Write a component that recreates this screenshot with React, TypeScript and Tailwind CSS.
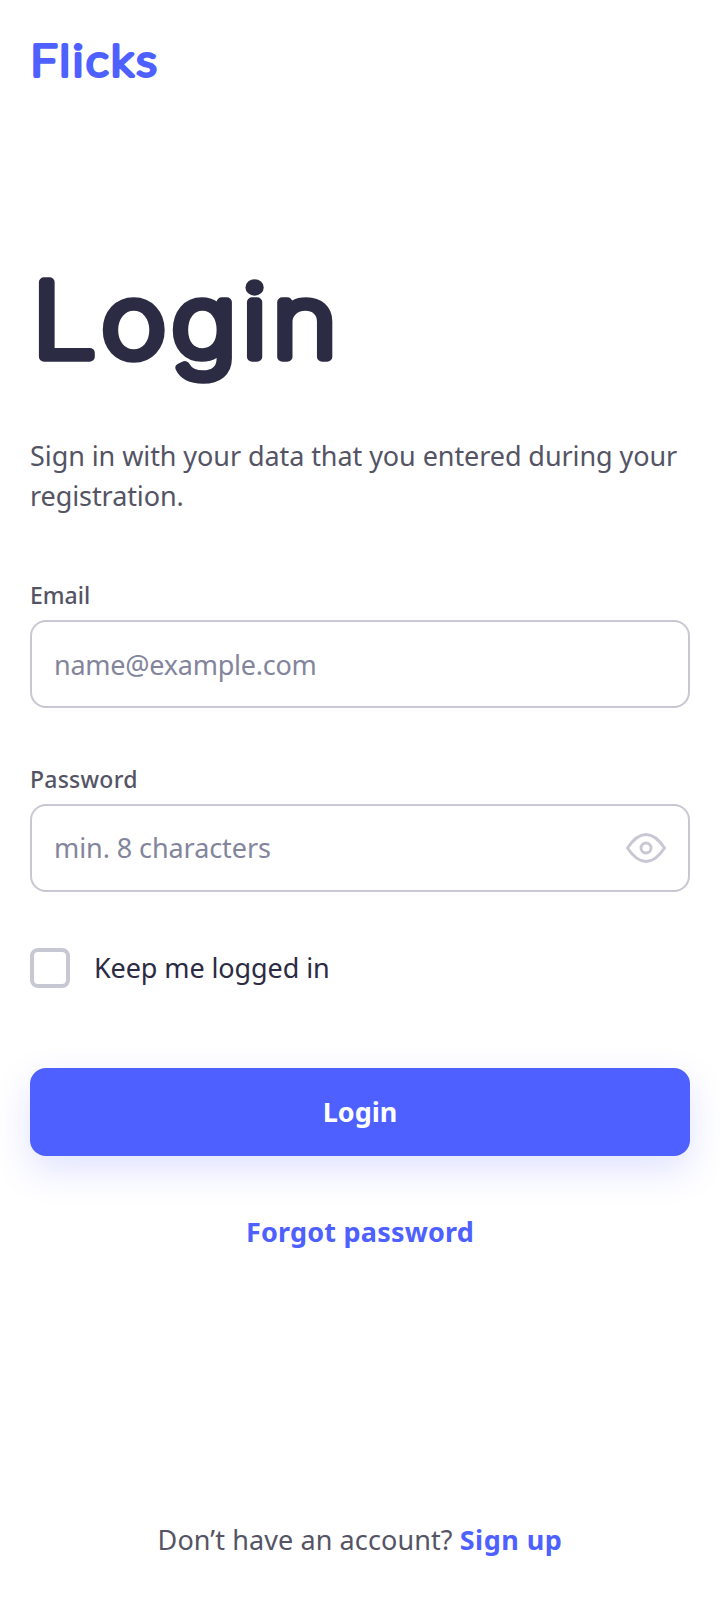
import { useState } from "react";

function EyeIcon() {
  return (
    <svg viewBox="0 0 40 40" className="size-10" fill="none" stroke="#c8c7d4" strokeWidth="3">
      <path d="M1.500 20C7.500 11 13 6.500 20 6.500S32.500 11 38.500 20C32.500 29 27 33.500 20 33.500S7.500 29 1.500 20Z" strokeLinejoin="round" />
      <circle cx="20" cy="20" r="5" />
    </svg>
  );
}

export default function App() {
  const [keep, setKeep] = useState(false);
  return (
    <main className="flex h-[1624px] w-[720px] flex-col bg-white px-[30px] font-['Noto_Sans',sans-serif] text-[27px] leading-10 text-[#545465]">
      <header className="mt-8 h-[60px]">
        <svg className="h-[60px] w-[140px] overflow-visible font-['Lato']" role="img" aria-label="Flicks">
          <text x="0.500" y="44.300" transform="scale(1.1 1)" fontSize="43" fontWeight="300" fill="#4e60ff" stroke="#4e60ff" strokeWidth="4" strokeLinejoin="round" textLength="114.500">Flicks</text>
        </svg>
      </header>
      <h1 className="mt-[148px] h-[160px]">
        <svg className="h-[160px] w-[320px] overflow-visible font-['Inter']" role="img" aria-label="Login">
          <text x="2" y="117" transform="scale(1.1 1)" fontSize="103" fontWeight="200" fill="#2b2b43" stroke="#2b2b43" strokeWidth="9.500" strokeLinejoin="round" textLength="277">L<tspan fontSize="100">ogin</tspan></text>
        </svg>
      </h1>
      <p className="mt-9 tracking-[-0.080px]">
        Sign in with your data that you entered during your
        <br />
        registration.
      </p>
      <form className="flex flex-col" onSubmit={(e) => e.preventDefault()}>
        <label htmlFor="email" className="mt-[60px] h-10 text-[23px] leading-[38px] font-medium">Email</label>
        <input id="email" type="email" placeholder="name@example.com" className="mt-1 h-[88px] w-full rounded-2xl border-2 border-[#c8c7d4] px-[22px] tracking-[-0.250px] outline-none placeholder:text-[#83859c] placeholder:opacity-100" />
        <label htmlFor="password" className="mt-[52px] h-10 text-[23px] leading-[38px] font-medium tracking-[0.250px]">Password</label>
        <div className="mt-1 flex h-[88px] items-center rounded-2xl border-2 border-[#c8c7d4] px-[22px]">
          <input id="password" type="password" placeholder="min. 8 characters" className="min-w-0 flex-1 tracking-[-0.080px] outline-none placeholder:text-[#83859c] placeholder:opacity-100" />
          <button type="button" aria-label="Show password"><EyeIcon /></button>
        </div>
        <label className="mt-14 flex h-10 items-center gap-6 text-[#2b2b43]">
          <input type="checkbox" checked={keep} onChange={() => setKeep(!keep)} className="size-10 appearance-none rounded-lg border-4 border-[#c8c7d4] checked:bg-[#4e60ff]" />
          <span className="tracking-[-0.100px]">Keep me logged in</span>
        </label>
        <button type="submit" className="mt-20 h-[88px] rounded-2xl bg-[#4e60ff] font-bold text-white shadow-[0_14px_36px_rgba(78,96,255,0.180)]">Login</button>
      </form>
      <a className="mt-14 self-center font-bold tracking-[0.200px] text-[#4e60ff]">Forgot password</a>
      <p className="mt-[268px] self-center">
        <span className="tracking-[0.100px]">Don’t have an account?</span> <a className="font-bold tracking-[0.500px] text-[#4e60ff]">Sign up</a>
      </p>
    </main>
  );
}
